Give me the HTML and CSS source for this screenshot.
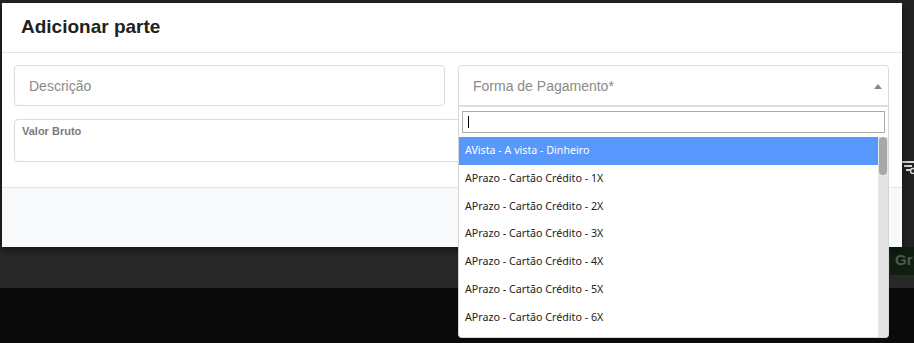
FILE: index.html
```html
<!DOCTYPE html>
<html lang="pt-BR">
<head>
<meta charset="utf-8">
<title>Adicionar parte</title>
<link rel="stylesheet" href="styles.css">
</head>
<body>
<div class="page">
  <div class="bg-top">
    <div class="bg-right">
      <svg class="filter-icon" width="14" height="14" viewBox="0 0 14 14">
        <rect x="0" y="1" width="12" height="2" fill="#d8d8d8"/>
        <rect x="2" y="5" width="8" height="2" fill="#d8d8d8"/>
        <rect x="4" y="9" width="4" height="2" fill="#d8d8d8"/>
        <circle cx="11" cy="11" r="2.5" fill="none" stroke="#d8d8d8" stroke-width="1.5"/>
      </svg>
    </div>
  </div>
  <div class="bg-band">
    <div class="green-btn">Gr</div>
  </div>
  <div class="bg-bottom"></div>

  <div class="modal">
    <div class="modal-header">
      <h1 class="modal-title">Adicionar parte</h1>
    </div>
    <div class="modal-body">
      <div class="row">
        <div class="field input-box"><span class="placeholder">Descrição</span></div>
        <div class="field select-box open">
          <span class="placeholder">Forma de Pagamento*</span>
          <span class="arrow"></span>
        </div>
      </div>
      <div class="field valor-box">
        <span class="valor-label">Valor Bruto</span>
      </div>
    </div>
    <div class="modal-footer"></div>

    <div class="dropdown">
      <div class="search"><span class="caret"></span></div>
      <div class="results">
        <ul class="options">
          <li class="option active">AVista - A vista - Dinheiro</li>
          <li class="option">APrazo - Cartão Crédito - 1X</li>
          <li class="option">APrazo - Cartão Crédito - 2X</li>
          <li class="option">APrazo - Cartão Crédito - 3X</li>
          <li class="option">APrazo - Cartão Crédito - 4X</li>
          <li class="option">APrazo - Cartão Crédito - 5X</li>
          <li class="option">APrazo - Cartão Crédito - 6X</li>
        </ul>
        <div class="scrollbar"><div class="thumb"></div></div>
      </div>
    </div>
  </div>
</div>
</body>
</html>
```

FILE: styles.css
```css
* { box-sizing: border-box; }
html, body { margin: 0; padding: 0; }
body {
  width: 914px;
  height: 343px;
  overflow: hidden;
  background: #0a0a0a;
  font-family: "Liberation Sans", Arial, sans-serif;
}
.page {
  position: relative;
  width: 914px;
  height: 343px;
  display: flex;
  flex-direction: column;
}
.bg-top {
  height: 247px;
  background: #232323;
  display: flex;
  justify-content: flex-end;
}
.bg-right {
  width: 12px;
  padding-top: 160px;
}
.filter-icon { display: block; }
.bg-band {
  height: 41px;
  background: #282828;
  display: flex;
  justify-content: flex-end;
}
.green-btn {
  width: 24px;
  height: 28px;
  background: #0f1e10;
  color: #4f5a55;
  font-weight: bold;
  font-size: 15px;
  padding: 4px 0 0 5px;
  overflow: hidden;
  white-space: nowrap;
}
.bg-bottom {
  flex: 1;
  background: #0a0a0a;
}

.modal {
  position: absolute;
  left: 2px;
  top: 3px;
  width: 900px;
  height: 244px;
  background: #fff;
  display: flex;
  flex-direction: column;
  box-shadow: 0 3px 8px rgba(0,0,0,0.5);
}
.modal-header {
  height: 50px;
  border-bottom: 1px solid #e3e3e3;
  padding: 13px 19px 0;
}
.modal-title {
  margin: 0;
  font-size: 19px;
  font-weight: bold;
  color: #212121;
  line-height: 22px;
}
.modal-body {
  height: 134px;
  padding: 12px 13px 0 12px;
  display: flex;
  flex-direction: column;
  gap: 13px;
}
.row {
  display: flex;
  gap: 13px;
}
.field {
  border: 1px solid #dcdcdc;
  border-radius: 4px;
  background: #fff;
}
.input-box, .select-box {
  width: 431px;
  height: 41px;
  display: flex;
  align-items: center;
  padding-left: 14px;
}
.placeholder {
  font-size: 14px;
  color: #8a8a8a;
}
.select-box {
  position: relative;
  border-radius: 4px 4px 0 0;
  padding-left: 14px;
}
.arrow {
  position: absolute;
  right: 6px;
  top: 18px;
  width: 0;
  height: 0;
  border-left: 4px solid transparent;
  border-right: 4px solid transparent;
  border-bottom: 5px solid #888;
}
.valor-box {
  height: 43px;
  padding: 5px 7px;
}
.valor-label {
  display: block;
  font-size: 11px;
  font-weight: bold;
  color: #7a7a7a;
}
.modal-footer {
  flex: 1;
  background: #f8f9fa;
  border-top: 1px solid #e3e3e3;
}

.dropdown {
  position: absolute;
  left: 456px;
  top: 103px;
  width: 431px;
  height: 232px;
  background: #fff;
  border: 1px solid #d6d6d6;
  border-top: 1px solid #e0e0e0;
  border-radius: 0 0 4px 4px;
  display: flex;
  flex-direction: column;
  overflow: hidden;
}
.search {
  margin: 4px 3px 4px 3px;
  height: 22px;
  border: 1px solid #aaa;
  position: relative;
}
.caret {
  position: absolute;
  left: 5px;
  top: 4px;
  width: 1px;
  height: 12px;
  background: #000;
}
.results {
  flex: 1;
  display: flex;
}
.options {
  list-style: none;
  margin: 0;
  padding: 0;
  flex: 1;
}
.option {
  height: 27.8px;
  line-height: 27.8px;
  padding-left: 6px;
  font-family: "Noto Sans", "Open Sans", sans-serif;
  font-size: 10.7px;
  color: #222;
  white-space: nowrap;
}
.option.active {
  background: #5897fb;
  color: #fff;
}
.scrollbar {
  width: 10px;
  background: #e4e4e4;
  padding: 0 1px;
}
.thumb {
  height: 38px;
  background: #a8a8a8;
  border-radius: 4px;
}
```
